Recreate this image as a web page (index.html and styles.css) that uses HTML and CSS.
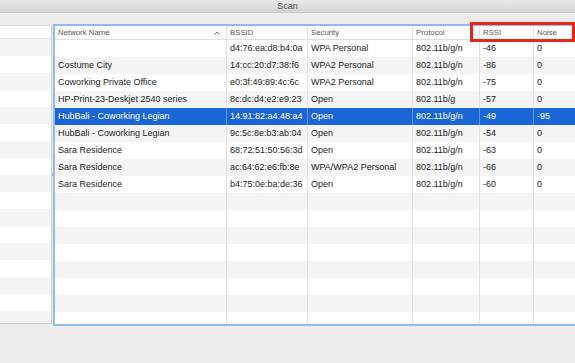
FILE: index.html
```html
<!DOCTYPE html>
<html lang="en">
<head>
    <meta charset="UTF-8">
    <meta name="viewport" content="width=device-width, initial-scale=1.0">
    <title>Scan</title>
    <link rel="stylesheet" href="styles.css">
</head>
<body>
    <div class="window">
        <div class="titlebar">Scan</div>

        <div class="content">
            <div class="sidebar">
                <div class="side-head"></div>
                <div class="side-row"></div><div class="side-row"></div><div class="side-row"></div>
                <div class="side-row"></div><div class="side-row"></div><div class="side-row"></div>
                <div class="side-row"></div><div class="side-row"></div><div class="side-row"></div>
                <div class="side-row"></div><div class="side-row"></div><div class="side-row"></div>
                <div class="side-row"></div><div class="side-row"></div><div class="side-row"></div>
                <div class="side-row"></div><div class="side-row"></div>
            </div>

            <div class="splitter"><span class="grip"></span></div>

            <div class="table">
                <div class="row head">
                    <div class="cell sorted">Network Name
                        <svg class="sort-arrow" width="6" height="4" viewBox="0 0 6 4"><path d="M0.5 3.5 L3 1 L5.5 3.5" fill="none" stroke="#6b6b6b" stroke-width="1"/></svg>
                    </div>
                    <div class="cell">BSSID</div>
                    <div class="cell">Security</div>
                    <div class="cell">Protocol</div>
                    <div class="cell">RSSI</div>
                    <div class="cell">Noise</div>
                </div>

                <div class="row"><div class="cell"></div><div class="cell">d4:76:ea:d8:b4:0a</div><div class="cell">WPA Personal</div><div class="cell">802.11b/g/n</div><div class="cell">-46</div><div class="cell">0</div></div>
                <div class="row"><div class="cell">Costume City</div><div class="cell">14:cc:20:d7:38:f6</div><div class="cell">WPA2 Personal</div><div class="cell">802.11b/g/n</div><div class="cell">-86</div><div class="cell">0</div></div>
                <div class="row"><div class="cell">Coworking Private Office</div><div class="cell">e0:3f:49:89:4c:6c</div><div class="cell">WPA2 Personal</div><div class="cell">802.11b/g/n</div><div class="cell">-75</div><div class="cell">0</div></div>
                <div class="row"><div class="cell">HP-Print-23-Deskjet 2540 series</div><div class="cell">8c:dc:d4:e2:e9:23</div><div class="cell">Open</div><div class="cell">802.11b/g</div><div class="cell">-57</div><div class="cell">0</div></div>
                <div class="row selected"><div class="cell">HubBali - Coworking Legian</div><div class="cell">14:91:82:a4:48:a4</div><div class="cell">Open</div><div class="cell">802.11b/g/n</div><div class="cell">-49</div><div class="cell">-95</div></div>
                <div class="row"><div class="cell">HubBali - Coworking Legian</div><div class="cell">9c:5c:8e:b3:ab:04</div><div class="cell">Open</div><div class="cell">802.11b/g/n</div><div class="cell">-54</div><div class="cell">0</div></div>
                <div class="row"><div class="cell">Sara Residence</div><div class="cell">68:72:51:50:56:3d</div><div class="cell">Open</div><div class="cell">802.11b/g/n</div><div class="cell">-63</div><div class="cell">0</div></div>
                <div class="row"><div class="cell">Sara Residence</div><div class="cell">ac:64:62:e6:fb:8e</div><div class="cell">WPA/WPA2 Personal</div><div class="cell">802.11b/g/n</div><div class="cell">-66</div><div class="cell">0</div></div>
                <div class="row"><div class="cell">Sara Residence</div><div class="cell">b4:75:0e:ba:de:36</div><div class="cell">Open</div><div class="cell">802.11b/g/n</div><div class="cell">-60</div><div class="cell">0</div></div>

                <!-- empty filler rows -->
                <div class="row"><div class="cell"></div><div class="cell"></div><div class="cell"></div><div class="cell"></div><div class="cell"></div><div class="cell"></div></div>
                <div class="row"><div class="cell"></div><div class="cell"></div><div class="cell"></div><div class="cell"></div><div class="cell"></div><div class="cell"></div></div>
                <div class="row"><div class="cell"></div><div class="cell"></div><div class="cell"></div><div class="cell"></div><div class="cell"></div><div class="cell"></div></div>
                <div class="row"><div class="cell"></div><div class="cell"></div><div class="cell"></div><div class="cell"></div><div class="cell"></div><div class="cell"></div></div>
                <div class="row"><div class="cell"></div><div class="cell"></div><div class="cell"></div><div class="cell"></div><div class="cell"></div><div class="cell"></div></div>
                <div class="row"><div class="cell"></div><div class="cell"></div><div class="cell"></div><div class="cell"></div><div class="cell"></div><div class="cell"></div></div>
                <div class="row"><div class="cell"></div><div class="cell"></div><div class="cell"></div><div class="cell"></div><div class="cell"></div><div class="cell"></div></div>
                <div class="row"><div class="cell"></div><div class="cell"></div><div class="cell"></div><div class="cell"></div><div class="cell"></div><div class="cell"></div></div>
            </div>
        </div>

        <!-- red highlight box over RSSI / Noise headers -->
        <div class="highlight"></div>
    </div>
</body>
</html>
```

FILE: styles.css
```css
* {
    margin: 0;
    padding: 0;
    box-sizing: border-box;
    font-family: 'Liberation Sans', Arial, sans-serif;
}

body {
    background-color: #ececec;
    width: 575px;
    height: 363px;
    overflow: hidden;
}

.window {
    position: relative;
    width: 575px;
    height: 363px;
    background-color: #ececec;
}

.titlebar {
    height: 13px;
    background: linear-gradient(to bottom, #e9e9e9, #d4d4d4);
    border-bottom: 1px solid #c9c9c9;
    color: #4c4c4c;
    font-size: 9px;
    line-height: 12px;
    text-align: center;
}

.content {
    display: flex;
    height: 311px;
    padding-top: 12px;
}

/* left pane */
.sidebar {
    width: 52px;
    flex-shrink: 0;
    background-color: #fff;
    border-top: 1px solid #d6d6d6;
    border-right: 1px solid #d0d0d0;
    border-bottom: 1px solid #d0d0d0;
    overflow: hidden;
}

.side-head {
    height: 13px;
    border-bottom: 1px solid #e0e0e0;
}

.side-row {
    height: 17px;
}

.side-row:nth-child(even) {
    background-color: #f4f4f4;
}

.splitter {
    width: 3px;
    flex-shrink: 0;
    display: flex;
    align-items: center;
}

.grip {
    display: block;
    width: 2px;
    height: 3px;
    background-color: #b4b4b4;
}

/* table */
.table {
    flex: 1;
    background-color: #fff;
    box-shadow: 0 0 0 2px #90baed;
    overflow: hidden;
    margin-top: 1px;
}

.row {
    display: grid;
    grid-template-columns: 171px 81px 105px 67px 54px 1fr;
    height: 17px;
    color: #1c1c1c;
    font-size: 9px;
    line-height: 17px;
}

.row:nth-child(odd) {
    background-color: #f4f4f4;
}

.cell {
    padding: 0 3px;
    white-space: nowrap;
    overflow: hidden;
    border-left: 1px solid #e1e1e1;
}

.cell:first-child {
    border-left: none;
}

.row.head {
    height: 14px;
    line-height: 13px;
    background-color: #fff;
    border-bottom: 1px solid #dedede;
    color: #555;
    font-size: 7.8px;
}

.row.head .cell {
    border-left-color: #e4e4e4;
}

.sorted {
    display: flex;
    justify-content: space-between;
    align-items: center;
}

.sort-arrow {
    margin-right: 3px;
}

.row.selected {
    background-color: #1a66d6;
    color: #fff;
}

.row.selected .cell {
    border-left-color: #5f97e2;
}

/* annotation */
.highlight {
    position: absolute;
    left: 470px;
    top: 22px;
    width: 105px;
    height: 20px;
    border: 3px solid #ee2418;
}
```
